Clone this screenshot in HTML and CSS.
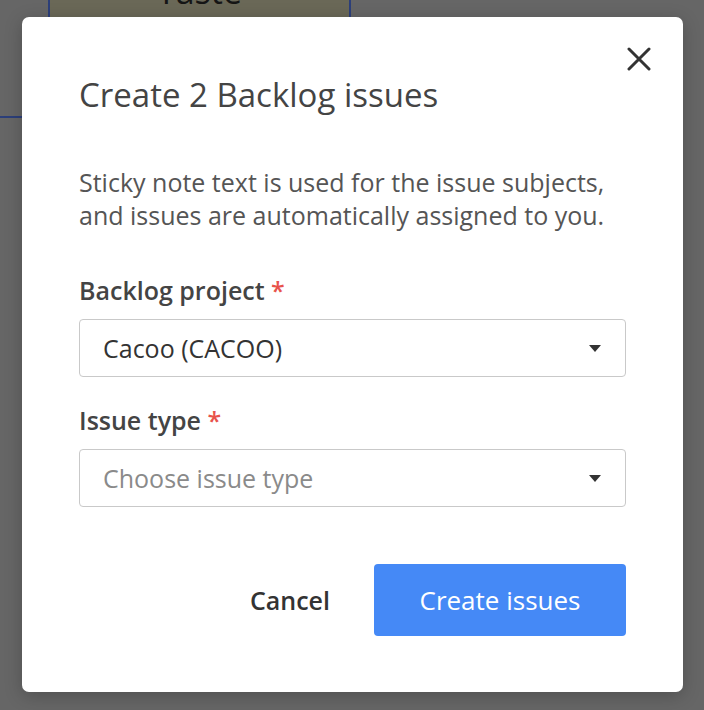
FILE: index.html
```html
<!DOCTYPE html>
<html lang="en">
<head>
<meta charset="utf-8">
<title>Create Backlog issues</title>
<link rel="stylesheet" href="styles.css">
</head>
<body>
<div class="canvas">
  <div class="note"><span class="note-text">Taste</span></div>
  <div class="line-h"></div>
</div>
<div class="modal">
  <button class="close" aria-label="Close">
    <svg width="24" height="24" viewBox="0 0 24 24"><path d="M2 2 L22 22 M22 2 L2 22" stroke="#333" stroke-width="3" stroke-linecap="round" fill="none"/></svg>
  </button>
  <h1 class="title">Create 2 Backlog issues</h1>
  <p class="desc">Sticky note text is used for the issue subjects,<br>and issues are automatically assigned to you.</p>
  <div class="field">
    <div class="label">Backlog project <span class="req">*</span></div>
    <div class="select"><span class="value">Cacoo (CACOO)</span><span class="caret"></span></div>
  </div>
  <div class="field">
    <div class="label">Issue type <span class="req">*</span></div>
    <div class="select"><span class="placeholder">Choose issue type</span><span class="caret"></span></div>
  </div>
  <div class="actions">
    <button class="btn-cancel">Cancel</button>
    <button class="btn-primary">Create issues</button>
  </div>
</div>
</body>
</html>
```
FILE: styles.css
```css
* { box-sizing: border-box; }
html, body {
  margin: 0;
  padding: 0;
  width: 704px;
  height: 710px;
  overflow: hidden;
  background: #666666;
  font-family: "Open Sans", "Noto Sans", sans-serif;
}
.canvas {
  position: absolute;
  inset: 0;
}
.note {
  position: absolute;
  left: 48px;
  top: -100px;
  width: 303px;
  height: 300px;
  background: #6a6857;
  border-left: 2px solid #2c3f7a;
  border-right: 2px solid #2c3f7a;
}
.note-text {
  position: absolute;
  left: 0;
  right: 0;
  top: 73px;
  text-align: center;
  font-size: 34px;
  line-height: 36px;
  color: #151515;
}
.line-h {
  position: absolute;
  left: 0;
  top: 116px;
  width: 30px;
  height: 2px;
  background: #2c3f7a;
}
.modal {
  position: relative;
  margin: 17px 0 0 22px;
  width: 661px;
  height: 675px;
  background: #fff;
  border-radius: 7px;
  box-shadow: 0 4px 18px rgba(0,0,0,0.22);
  padding: 58px 57px 56px 57px;
  display: flex;
  flex-direction: column;
}
.close {
  position: absolute;
  top: 30px;
  right: 32px;
  width: 24px;
  height: 24px;
  padding: 0;
  border: 0;
  background: none;
  display: flex;
}
.title {
  margin: 0;
  font-size: 33px;
  line-height: 40px;
  font-weight: 500;
  color: #444;
}
.desc {
  margin: 51px 0 0 0;
  font-size: 25px;
  line-height: 33px;
  color: #555;
}
.field { display: flex; flex-direction: column; }
.field:first-of-type { margin-top: 43px; }
.field + .field { margin-top: 28px; }
.label {
  font-size: 25px;
  line-height: 30px;
  font-weight: 600;
  color: #444;
  margin-bottom: 14px;
}
.req { color: #e8534c; }
.select {
  height: 58px;
  border: 1px solid #c9c9c9;
  border-radius: 4px;
  display: flex;
  align-items: center;
  justify-content: space-between;
  padding: 0 24px 0 23px;
  font-size: 25px;
}
.value { color: #333; }
.placeholder { color: #8a8a8a; }
.caret {
  width: 0;
  height: 0;
  border-left: 6px solid transparent;
  border-right: 6px solid transparent;
  border-top: 7px solid #333;
}
.actions {
  margin-top: auto;
  display: flex;
  justify-content: flex-end;
  align-items: center;
  gap: 44px;
}
.btn-cancel {
  border: 0;
  background: none;
  padding: 0;
  font-family: inherit;
  font-size: 25px;
  font-weight: 600;
  color: #333;
}
.btn-primary {
  width: 252px;
  height: 72px;
  border: 0;
  border-radius: 4px;
  background: #4589f6;
  color: #fff;
  font-family: inherit;
  font-size: 26px;
  font-weight: 500;
}
```
